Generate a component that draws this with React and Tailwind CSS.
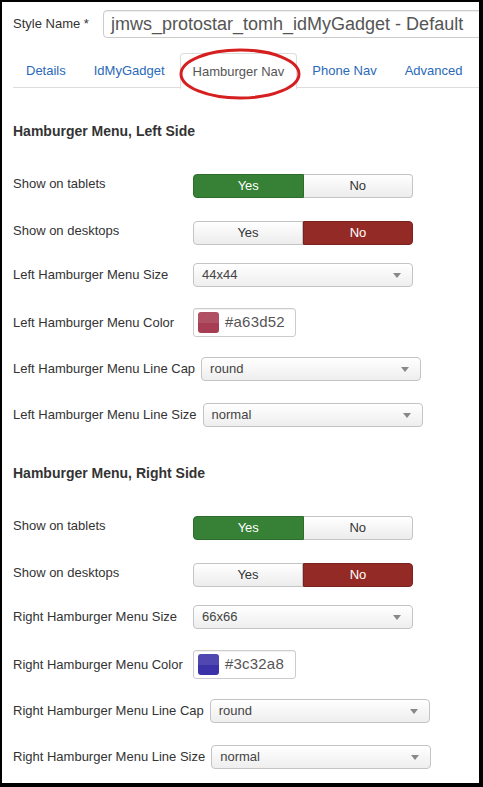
import React from 'react'

const TABS = ['Details', 'IdMyGadget', 'Hamburger Nav', 'Phone Nav', 'Advanced']

function Caret() {
  return (
    <svg width="8" height="5" viewBox="0 0 8 5" className="shrink-0">
      <path d="M0 0 L8 0 L4 5 Z" fill="#888" />
    </svg>
  )
}

function Toggle({ yes }) {
  return (
    <div className="flex w-[220px] h-[24px] text-[13px] shrink-0">
      <div
        className={`flex-1 flex items-center justify-center rounded-l-[4px] border ${
          yes
            ? 'bg-[#378137] border-[#2e6c2e] text-white'
            : 'bg-gradient-to-b from-white to-[#ececec] border-[#c4c4c4] text-[#333]'
        }`}
      >
        Yes
      </div>
      <div
        className={`flex-1 flex items-center justify-center rounded-r-[4px] border ${
          yes
            ? 'bg-gradient-to-b from-white to-[#ececec] border-[#c4c4c4] border-l-0 text-[#333]'
            : 'bg-[#942a25] border-[#7a221e] text-white'
        }`}
      >
        No
      </div>
    </div>
  )
}

function Select({ value }) {
  return (
    <div className="flex items-center justify-between shrink-0 w-[220px] h-[24px] pl-[8px] pr-[11px] rounded-[4px] border border-[#c4c4c4] bg-gradient-to-b from-white to-[#eeeeee] text-[13px] text-[#444]">
      <span>{value}</span>
      <Caret />
    </div>
  )
}

function ColorInput({ color }) {
  return (
    <div className="flex items-center shrink-0 w-[103px] h-[29px] pl-[4px] rounded-[3px] border border-[#ccc] bg-white shadow-[inset_0_1px_1px_rgba(0,0,0,0.06)]">
      <div className="w-[21px] h-[21px] rounded-[3px] overflow-hidden flex flex-col" style={{ background: color }}>
        <div className="h-1/2 bg-white/10" />
      </div>
      <span className="ml-[6px] text-[15px] text-[#555] tracking-[0.2px]">{color}</span>
    </div>
  )
}

function Row({ label, mt, children, lift }) {
  return (
    <div className="flex items-center" style={{ marginTop: mt }}>
      <div className={`min-w-[180px] shrink-0 pr-[6px] text-[13px] text-[#333] whitespace-nowrap ${lift ? '-mt-[5px]' : ''}`}>
        {label}
      </div>
      {children}
    </div>
  )
}

function Section({ side, sizes, color, title, mt }) {
  return (
    <div>
      <h3 className="text-[14px] leading-[20px] font-bold text-[#333]" style={{ marginTop: mt }}>
        {title}
      </h3>
      <Row label="Show on tablets" mt={33} lift>
        <Toggle yes />
      </Row>
      <Row label="Show on desktops" mt={23} lift>
        <Toggle yes={false} />
      </Row>
      <Row label={`${side} Hamburger Menu Size`} mt={18}>
        <Select value={sizes} />
      </Row>
      <Row label={`${side} Hamburger Menu Color`} mt={21}>
        <ColorInput color={color} />
      </Row>
      <Row label={`${side} Hamburger Menu Line Cap`} mt={20}>
        <Select value="round" />
      </Row>
      <Row label={`${side} Hamburger Menu Line Size`} mt={22}>
        <Select value="normal" />
      </Row>
    </div>
  )
}

export default function App() {
  return (
    <div className="w-[483px] h-[787px] bg-black pt-[2px] pl-[2px] pr-[4px] pb-[4px] font-['Liberation_Sans',Arial,sans-serif]">
      <div className="relative w-full h-full bg-white overflow-hidden pl-[11px]">
        {/* ── Style name ─────────────────────────────── */}
        <div className="flex items-center mt-[8px]">
          <div className="w-[90px] shrink-0 whitespace-nowrap text-[13px] text-[#333]">Style Name *</div>
          <div className="h-[28px] w-[420px] shrink-0 flex items-center pl-[7px] rounded-[4px] border border-[#ccc] shadow-[inset_0_1px_1px_rgba(0,0,0,0.07)] text-[18px] text-[#555] whitespace-nowrap">
            jmws_protostar_tomh_idMyGadget - Default
          </div>
        </div>

        {/* ── Tabs ───────────────────────────────────── */}
        <div className="flex mt-[15px] border-b border-[#ddd] h-[35px]">
          {TABS.map((t) => {
            const active = t === 'Hamburger Nav'
            return (
              <div
                key={t}
                className={`px-[12px] mr-[2px] shrink-0 whitespace-nowrap flex items-center text-[13px] rounded-t-[4px] border border-b-0 ${
                  active
                    ? 'text-[#555] bg-white border-[#ddd] h-[36px] relative'
                    : 'text-[#2a69b8] border-transparent'
                }`}
              >
                {t}
              </div>
            )
          })}
        </div>

        <svg className="absolute left-0 top-0 pointer-events-none" width="477" height="110">
          <ellipse cx="238" cy="72" rx="59" ry="24" fill="none" stroke="#d61f1f" strokeWidth="3" />
        </svg>

        <Section title="Hamburger Menu, Left Side" side="Left" sizes="44x44" color="#a63d52" mt={33} />
        <Section title="Hamburger Menu, Right Side" side="Right" sizes="66x66" color="#3c32a8" mt={36} />
      </div>
    </div>
  )
}
